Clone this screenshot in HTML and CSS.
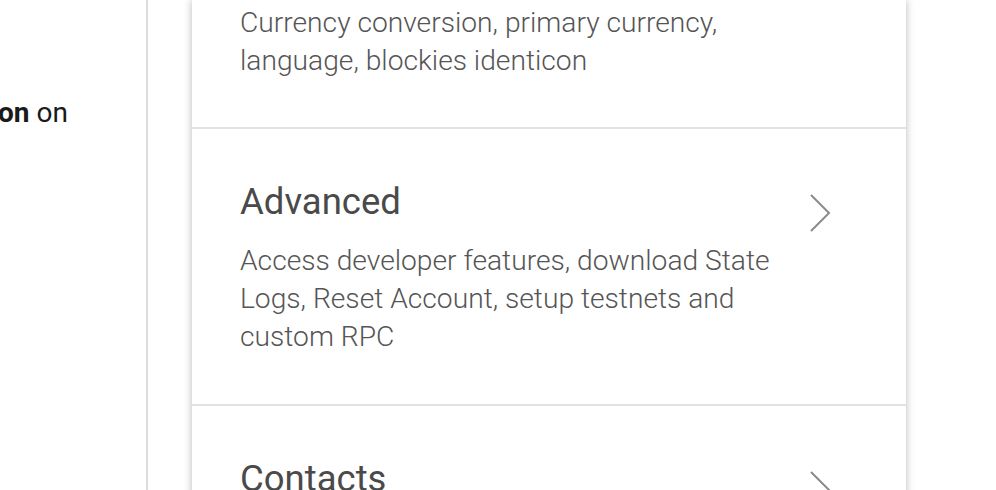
FILE: index.html
```html
<!DOCTYPE html>
<html>
<head>
<meta charset="utf-8">
<link rel="stylesheet" href="styles.css">
</head>
<body>
<div class="page">
  <aside class="side">
    <p class="side-text"><b>on</b> on</p>
  </aside>
  <main class="card">
    <section class="row row-cut">
      <div class="row-body">
        <p class="desc">Currency conversion, primary currency, language, blockies identicon</p>
      </div>
    </section>
    <section class="row">
      <div class="row-body">
        <h2 class="title">Advanced</h2>
        <p class="desc">Access developer features, download State Logs, Reset Account, setup testnets and custom RPC</p>
      </div>
      <svg class="chev" width="24" height="40" viewBox="0 0 24 40"><polyline points="3,2 21,20 3,38" fill="none" stroke="#8a8a8a" stroke-width="2"/></svg>
    </section>
    <section class="row">
      <div class="row-body">
        <h2 class="title">Contacts</h2>
        <p class="desc">Add, edit, remove, and manage your contacts</p>
      </div>
      <svg class="chev" width="24" height="40" viewBox="0 0 24 40"><polyline points="3,2 21,20 3,38" fill="none" stroke="#8a8a8a" stroke-width="2"/></svg>
    </section>
  </main>
</div>
</body>
</html>
```

FILE: styles.css
```css
html, body {
  margin: 0;
  padding: 0;
  background: #fff;
  overflow: hidden;
  height: 490px;
}
.page {
  display: flex;
  height: 490px;
  overflow: hidden;
  font-family: Roboto, "Liberation Sans", sans-serif;
}
.side {
  width: 146px;
  flex: none;
  border-right: 2px solid #dcdce0;
  overflow: hidden;
}
.side-text {
  margin: 97px 0 0 -2px;
  font-size: 28px;
  line-height: 32px;
  color: #1a1a1a;
  white-space: nowrap;
}
.side-text b { font-weight: 700; }
.card {
  margin-left: 44px;
  width: 714px;
  flex: none;
  height: 600px;
  background: #fff;
  box-shadow: 0 0 8px rgba(0,0,0,0.28);
  align-self: flex-start;
}
.row {
  display: flex;
  align-items: flex-start;
  padding: 52px 74px 48px 48px;
  border-bottom: 2px solid #e2e2e2;
}
.row-cut {
  padding-top: 4px;
  padding-bottom: 47px;
}
.row-body {
  flex: 1;
  min-width: 0;
}
.title {
  margin: 0 0 19px;
  font-size: 36.5px;
  line-height: 42px;
  font-weight: 400;
  color: #4a4a4a;
}
.desc {
  margin: 0;
  width: 545px;
  font-size: 28.2px;
  line-height: 38px;
  font-weight: 300;
  color: #555;
}
.chev {
  flex: none;
  margin-top: 12px;
}
```
